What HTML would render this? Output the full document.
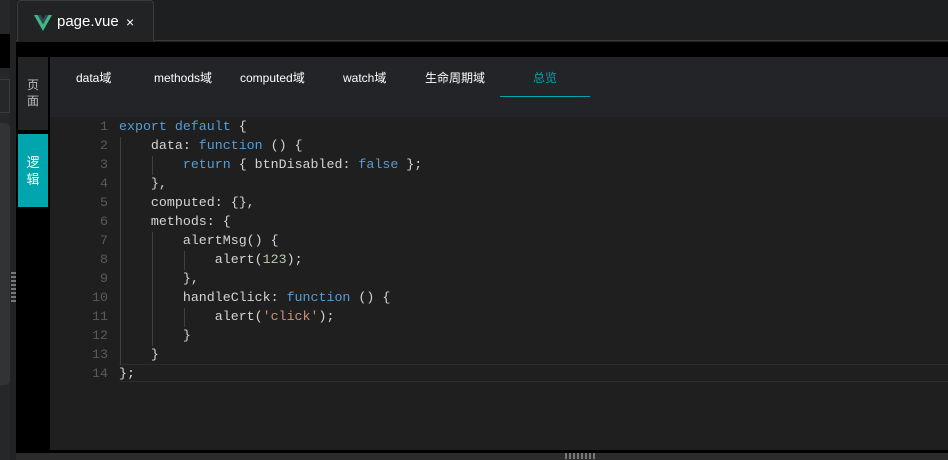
<!DOCTYPE html>
<html><head><meta charset="utf-8"><style>
*{margin:0;padding:0;box-sizing:border-box}
body{width:948px;height:460px;background:#1e1f20;position:relative;overflow:hidden;font-family:"Liberation Sans","Noto Sans CJK SC",sans-serif}
.a{position:absolute}
.code{font-family:"Liberation Mono","DejaVu Sans Mono",monospace;font-size:13.3px;color:#d4d4d4;white-space:pre;line-height:19px}
.k{color:#569cd6}.n{color:#b5cea8}.s{color:#ce9178}
.ln{color:#5a5a5a;text-align:right;width:60px;left:48px}
.nav{color:#ffffff;font-size:12px;top:69px}
</style></head><body>
<div class="a" style="left:0;top:0;width:16px;height:460px;background:#262729"></div>
<div class="a" style="left:0;top:34px;width:10px;height:34px;background:#000"></div>
<div class="a" style="left:0;top:79px;width:10px;height:34px;border:1px solid #3a3b3c;border-left:none"></div>
<div class="a" style="left:0;top:123px;width:10px;height:262px;background:#323335;border-radius:0 5px 5px 0"></div>
<div class="a" style="left:10px;top:0;width:6px;height:460px;background:#222325"></div>
<div class="a" style="left:11px;top:272px;width:5px;height:30px;background:repeating-linear-gradient(#777 0 2px,transparent 2px 4px)"></div>
<div class="a" style="left:16px;top:0;width:932px;height:41px;background:#1e1f20;border-bottom:1px solid #3a3b3c"></div>
<div class="a" style="left:17px;top:0;width:137px;height:42px;background:#222324;border:1px solid #3a3b3c;border-bottom:none;border-radius:4px 4px 0 0"></div>
<svg class="a" style="left:34px;top:15px" width="18" height="16" viewBox="0 0 18 16"><path d="M0 0h3.6L9 9.4 14.4 0H18L9 16z" fill="#41b883"/><path d="M3.6 0h3L9 4.2 11.4 0h3L9 9.4z" fill="#34495e"/></svg>
<div class="a" style="left:57px;top:13px;color:#fff;font-size:15px">page.vue</div>
<div class="a" style="left:126px;top:14px;color:#fff;font-size:14px">×</div>
<div class="a" style="left:16px;top:42px;width:932px;height:15px;background:#000"></div>
<div class="a" style="left:16px;top:57px;width:34px;height:393px;background:#000"></div>
<div class="a" style="left:18px;top:57px;width:30px;height:73px;background:#232425;color:#bbb;font-size:12px;text-align:center;padding-top:20px;line-height:16px">页<br>面</div>
<div class="a" style="left:18px;top:134px;width:30px;height:73px;background:#00a5ae;color:#fff;font-size:13px;text-align:center;padding-top:20px;line-height:17px">逻<br>辑</div>
<div class="a" style="left:50px;top:57px;width:898px;height:60px;background:#232427"></div>
<div class="a nav" style="left:76px">data域</div>
<div class="a nav" style="left:154px">methods域</div>
<div class="a nav" style="left:240px">computed域</div>
<div class="a nav" style="left:343px">watch域</div>
<div class="a nav" style="left:425px">生命周期域</div>
<div class="a nav" style="left:533px;color:#00a5ae">总览</div>
<div class="a" style="left:500px;top:96px;width:90px;height:1px;background:#00a5ae"></div>
<div class="a" style="left:50px;top:117px;width:898px;height:333px;background:#1f1f1f"></div>
<div class="a" style="left:119px;top:364px;width:829px;height:18px;border-top:1px solid #2c2c2c;border-bottom:1px solid #2c2c2c"></div>
<div class="a" style="left:120px;top:137px;width:1px;height:228px;background:#404040"></div>
<div class="a" style="left:152px;top:156px;width:1px;height:19px;background:#404040"></div>
<div class="a" style="left:152px;top:232px;width:1px;height:114px;background:#404040"></div>
<div class="a" style="left:184px;top:251px;width:1px;height:19px;background:#404040"></div>
<div class="a" style="left:184px;top:308px;width:1px;height:19px;background:#404040"></div>
<div class="a code ln" style="top:117px">1
2
3
4
5
6
7
8
9
10
11
12
13
14</div>
<div class="a code" style="left:119px;top:117px"><span class="k">export default</span> {
    data: <span class="k">function</span> () {
        <span class="k">return</span> { btnDisabled: <span class="k">false</span> };
    },
    computed: {},
    methods: {
        alertMsg() {
            alert(<span class="n">123</span>);
        },
        handleClick: <span class="k">function</span> () {
            alert(<span class="s">'click'</span>);
        }
    }
};</div>
<div class="a" style="left:16px;top:450px;width:932px;height:3px;background:#000"></div>
<div class="a" style="left:16px;top:453px;width:932px;height:7px;background:#2a2b2c"></div>
<div class="a" style="left:565px;top:453px;width:30px;height:6px;background:repeating-linear-gradient(90deg,#777 0 2px,transparent 2px 4px)"></div>
</body></html>
